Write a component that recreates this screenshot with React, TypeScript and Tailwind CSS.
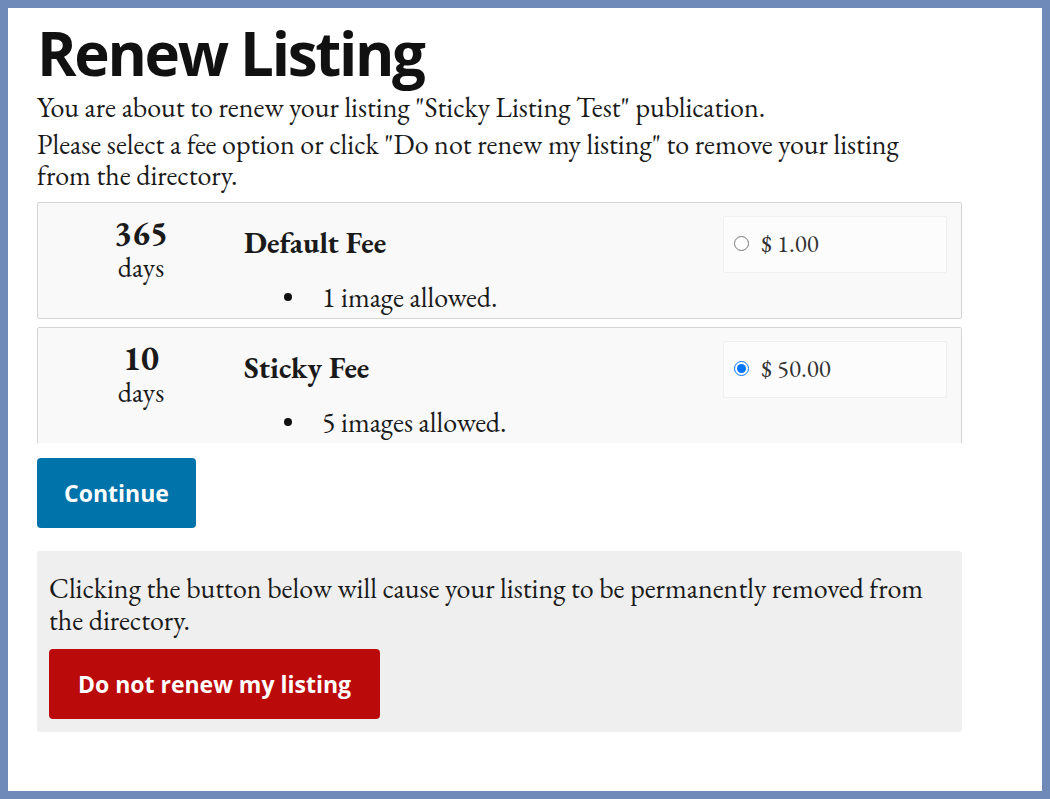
import React from "react";

const fees = [
  { days: "365", name: "Default Fee", perk: "1 image allowed.", price: "$ 1.00", checked: false },
  { days: "10", name: "Sticky Fee", perk: "5 images allowed.", price: "$ 50.00", checked: true },
];

const serif = "font-['EB_Garamond','Liberation_Serif',serif]";
const sans = "font-['Open_Sans','Noto_Sans',sans-serif]";

function FeeCard({ fee }: { fee: (typeof fees)[number] }) {
  return (
    <div className="flex h-[117px] shrink-0 rounded-[2px] border border-[#d4d4d4] bg-[#f9f9f9] text-[#1a1a1a]">
      <div className="flex w-[206px] shrink-0 flex-col items-center pt-[15px]">
        <span className="text-[34px] font-bold leading-[30px]">{fee.days}</span>
        <span className="mt-[5px] text-[28px] leading-[28px]">days</span>
      </div>
      <div className="flex-1 pt-[24px]">
        <h3 className="text-[30px] font-bold leading-[32px]">{fee.name}</h3>
        <ul className="mt-[23px] text-[28px] leading-[30px]">
          <li className="flex items-center">
            <span className="ml-[40px] mr-[30px] h-[8px] w-[8px] rounded-full bg-[#111]" />
            {fee.perk}
          </li>
        </ul>
      </div>
      <div className="mr-[14px] mt-[13px] flex h-[57px] w-[224px] items-center self-start rounded-[2px] border border-[#efefef] bg-[#fcfcfc] pb-[3px] pl-[10px]">
        <input type="radio" name="fee" defaultChecked={fee.checked} className="m-0 h-[15px] w-[15px]" />
        <span className="ml-[12px] text-[25px] leading-[28px] text-[#333]">{fee.price}</span>
      </div>
    </div>
  );
}

export default function App() {
  return (
    <div className="h-[799px] w-[1050px] bg-[#6f89b8] p-2">
      <div className={`h-full w-full bg-white pl-[29px] ${serif}`}>
        <div className="w-[925px]">
          <h1 className={`${sans} pt-[10px] text-[60px] font-bold leading-[70px] tracking-[-2.3px] text-[#111]`}>
            Renew Listing
          </h1>
          <p className="mt-[4px] text-[28px] leading-[31px] text-[#1a1a1a]">
            You are about to renew your listing "Sticky Listing Test" publication.
          </p>
          <p className="mt-[6px] w-[900px] text-[28px] leading-[31px] text-[#1a1a1a]">
            Please select a fee option or click "Do not renew my listing" to remove your listing from the directory.
          </p>
          <div className="mt-[11px] flex h-[241px] flex-col gap-[8px] overflow-hidden">
            {fees.map((fee) => (
              <FeeCard key={fee.name} fee={fee} />
            ))}
          </div>
          <button
            className={`${sans} mt-[15px] h-[70px] w-[159px] rounded-[4px] bg-[#0073aa] text-[23px] font-bold text-white`}
          >
            Continue
          </button>
          <div className="mt-[23px] rounded-[3px] bg-[#efefef] px-[12px] pb-[13px] pt-[21px]">
            <p className="text-[28px] leading-[32px] text-[#1a1a1a]">
              Clicking the button below will cause your listing to be permanently removed from the directory.
            </p>
            <button
              className={`${sans} mt-[13px] h-[70px] w-[331px] rounded-[4px] bg-[#bb0a0a] text-[23px] font-bold text-white`}
            >
              Do not renew my listing
            </button>
          </div>
        </div>
      </div>
    </div>
  );
}
